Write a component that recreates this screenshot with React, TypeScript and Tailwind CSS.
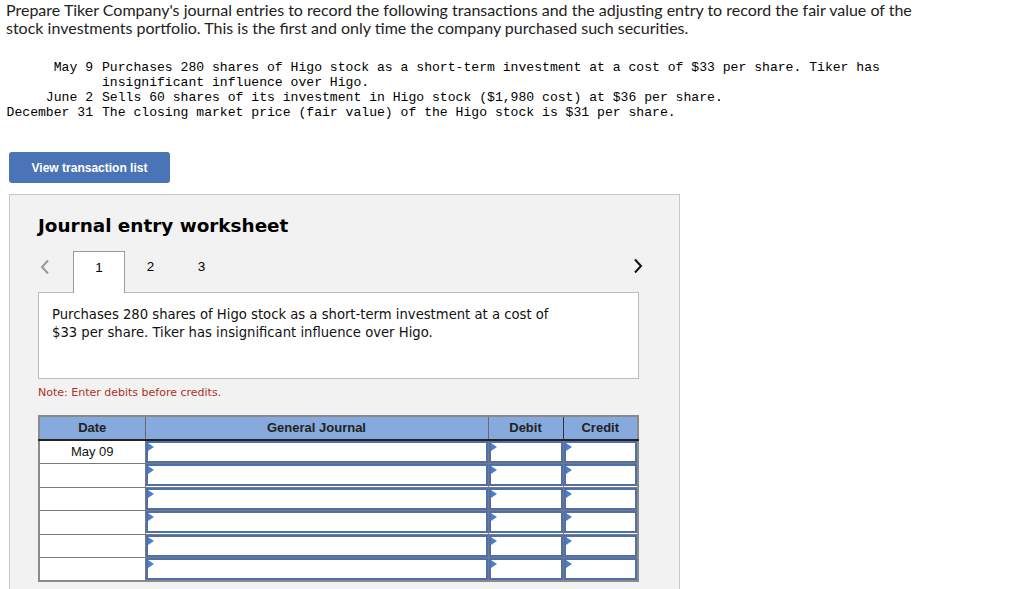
import React from "react";

const Tri = () => (
  <span className="absolute left-0 top-0 w-0 h-0 border-y-[4px] border-y-transparent border-l-[6px] border-l-[#4a7fd0]" />
);

function InputCell() {
  return (
    <td className="p-0 h-[23.5px] border border-[#7a7a7a]">
      <div className="relative h-[22px] border-2 border-[#4e6faa] bg-white">
        <Tri />
      </div>
    </td>
  );
}

const transactions = [
  {
    date: "May 9",
    text: "Purchases 280 shares of Higo stock as a short-term investment at a cost of $33 per share. Tiker has insignificant influence over Higo.",
  },
  { date: "June 2", text: "Sells 60 shares of its investment in Higo stock ($1,980 cost) at $36 per share." },
  { date: "December 31", text: "The closing market price (fair value) of the Higo stock is $31 per share." },
];

export default function App() {
  const rows = ["May 09", "", "", "", "", ""];
  return (
    <div className="w-[1024px] h-[589px] overflow-hidden bg-white text-black">
      <p className="ml-[6px] mt-[1px] w-[930px] text-[16px] leading-[18px] text-[#222] font-['Lato',sans-serif]">
        Prepare Tiker Company's journal entries to record the following transactions and the adjusting entry to record the fair value of the stock investments portfolio. This is the first and only time the company purchased such securities.
      </p>

      <div className="mt-[23px] ml-[6px] grid grid-cols-[87px_800px] gap-x-[9px] text-[13.1px] leading-[15px] text-black font-['Liberation_Mono',monospace]">
        {transactions.map((t) => (
          <React.Fragment key={t.date}>
            <div className="text-right">{t.date}</div>
            <div>{t.text}</div>
          </React.Fragment>
        ))}
      </div>

      <button className="mt-[32px] ml-[9px] w-[161px] h-[31px] rounded-[3px] bg-[#4a74b5] text-white text-[12px] font-bold font-['Liberation_Sans',Arial,sans-serif]">
        View transaction list
      </button>

      <div className="mt-[11px] ml-[9px] w-[671px] h-[400px] border border-[#c8c8c8] bg-[#f2f2f2] pl-[28px] pt-[18px]">
        <h2 className="text-[18.4px] leading-[26px] font-bold text-black font-['DejaVu_Sans',Verdana,sans-serif]">
          Journal entry worksheet
        </h2>

        <div className="mt-[12px] w-[601px] h-[42px] flex items-start relative font-['Liberation_Sans',Arial,sans-serif] text-[13.5px] leading-[16px]">
          <div className="w-[35px] pt-[8px] pl-[2px]">
            <svg width="10" height="16" viewBox="0 0 10 16" fill="none">
              <path d="M8 1.5 L2 8 L8 14.5" stroke="#9a9a9a" strokeWidth="2" />
            </svg>
          </div>
          <div className="w-[52px] h-[42px] pt-[8px] bg-white border border-[#9a9a9a] border-b-0 text-center relative z-10">
            1
          </div>
          <div className="w-[51px] pt-[8px] text-center">2</div>
          <div className="w-[51px] pt-[8px] text-center">3</div>
          <div className="flex-1" />
          <div className="w-[14px] pt-[7px] mr-[-8px]">
            <svg width="10" height="16" viewBox="0 0 10 16" fill="none">
              <path d="M2 1.5 L8 8 L2 14.5" stroke="#111" strokeWidth="2" />
            </svg>
          </div>
        </div>

        <div className="w-[601px] h-[87px] -mt-[1px] bg-white border border-[#bdbdbd] pl-[13px] pt-[13px] text-[13.2px] leading-[18px] text-[#111] font-['DejaVu_Sans',Verdana,sans-serif]">
          Purchases 280 shares of Higo stock as a short-term investment at a cost of
          <br />
          $33 per share. Tiker has insignificant influence over Higo.
        </div>

        <p className="mt-[7px] text-[11px] leading-[14px] text-[#ac3326] font-['DejaVu_Sans',Verdana,sans-serif]">
          Note: Enter debits before credits.
        </p>

        <table className="mt-[15px] border-collapse border-2 border-[#8a8a8a] table-fixed w-[600px] font-['Liberation_Sans',Arial,sans-serif]">
          <colgroup>
            <col className="w-[106px]" />
            <col className="w-[343px]" />
            <col className="w-[75px]" />
            <col className="w-[75px]" />
          </colgroup>
          <thead>
            <tr className="bg-[#86a9de] h-[24px] text-[13px] font-bold text-[#222]">
              <th className="border border-[#6a6a6a] border-b-2 border-b-[#222] font-bold">Date</th>
              <th className="border border-[#6a6a6a] border-b-2 border-b-[#222] font-bold">General Journal</th>
              <th className="border border-[#333] border-b-2 border-b-[#222] font-bold">Debit</th>
              <th className="border border-[#6a6a6a] border-b-2 border-b-[#222] font-bold">Credit</th>
            </tr>
          </thead>
          <tbody>
            {rows.map((d, i) => (
              <tr key={i} className="bg-white">
                <td className="h-[23.5px] p-0 border border-[#7a7a7a] text-center text-[13px] text-[#111]">{d}</td>
                <InputCell />
                <InputCell />
                <InputCell />
              </tr>
            ))}
          </tbody>
        </table>
      </div>
    </div>
  );
}
